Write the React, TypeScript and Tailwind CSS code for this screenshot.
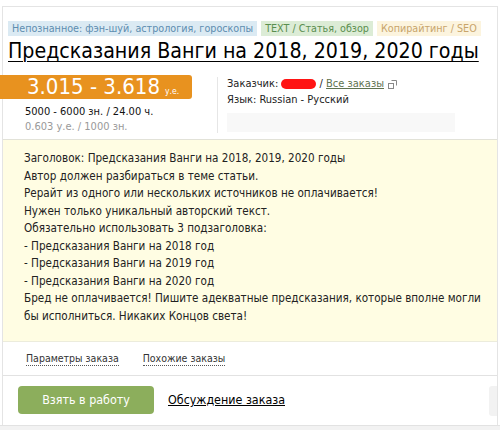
import React from "react";

export default function App() {
  const font = { fontFamily: '"DejaVu Sans Condensed", "DejaVu Sans", sans-serif' };
  return (
    <div className="w-[500px] h-[430px] bg-white overflow-hidden relative" style={font}>
      <div className="mt-[6px] ml-[2px] mr-[2px] border-l border-t border-r border-[#e4e4e4] h-[419px] flex flex-col">
        {/* tags */}
        <div className="flex gap-[4px] pl-[5px] pt-[14px] text-[10.7px] leading-[15px] whitespace-nowrap">
          <span className="bg-[#dbeaf3] text-[#5d8db0] px-[4px]">Непознанное: фэн-шуй, астрология, гороскопы</span>
          <span className="bg-[#dcecd6] text-[#5a8e4f] px-[4px]">TEXT / Статья, обзор</span>
          <span className="bg-[#fcf4de] text-[#c8a46a] px-[4px]">Копирайтинг / SEO</span>
        </div>
        {/* title */}
        <div className="pl-[5px] pt-[2px] whitespace-nowrap">
          <span className="text-[21.2px] leading-[26px] text-black underline underline-offset-[3px] decoration-1">
            Предсказания Ванги на 2018, 2019, 2020 годы
          </span>
        </div>
        {/* price row */}
        <div className="flex mt-[10px] h-[64px]">
          <div className="w-[217px] -ml-[3px] shrink-0">
            <div className="w-[192px] h-[24px] bg-[#e8921f] rounded-r-[3px] flex items-baseline pl-[27px] text-white whitespace-nowrap">
              <span className="text-[22px] leading-[24px]">3.015 - 3.618</span>
              <span className="text-[8.5px] ml-[5px]">у.е.</span>
            </div>
            <div className="pl-[25px] pt-[5px] text-[11px] leading-[15px] text-[#111] whitespace-nowrap">5000 - 6000 зн. / 24.00 ч.</div>
            <div className="pl-[25px] text-[11px] leading-[15px] text-[#999] whitespace-nowrap">0.603 у.е. / 1000 зн.</div>
          </div>
          <div className="w-px bg-[#e6e6e6] h-[56px] mt-[2px] shrink-0" />
          <div className="pl-[9px] pt-[1px] text-[11px] leading-[16px] text-[#222] whitespace-nowrap">
            <div className="flex items-center">
              <span>Заказчик:&nbsp;</span>
              <span className="inline-block w-[35px] h-[10px] rounded-full bg-[#ff1414]" />
              <span>&nbsp;/&nbsp;</span>
              <span className="text-[#5f7350] underline">Все заказы</span>
              <svg width="9" height="9" viewBox="0 0 9 9" className="ml-[4px]" fill="none" stroke="#888" strokeWidth="1">
                <rect x="0.5" y="3.5" width="5" height="5" />
                <path d="M3.5 0.5h5v5" />
              </svg>
            </div>
            <div>Язык: Russian - Русский</div>
            <div className="mt-[5px] w-[228px] h-[19px] bg-[#f8f8f8]" />
          </div>
        </div>
        {/* description */}
        <div className="border-t border-[#e2e2d8] bg-[#fffde3] pl-[21px] pt-[10px] h-[202px] text-[11.6px] leading-[17.5px] text-[#222] whitespace-nowrap">
          <div>Заголовок: Предсказания Ванги на 2018, 2019, 2020 годы</div>
          <div>Автор должен разбираться в теме статьи.</div>
          <div>Рерайт из одного или нескольких источников не оплачивается!</div>
          <div>Нужен только уникальный авторский текст.</div>
          <div>Обязательно использовать 3 подзаголовка:</div>
          <div>- Предсказания Ванги на 2018 год</div>
          <div>- Предсказания Ванги на 2019 год</div>
          <div>- Предсказания Ванги на 2020 год</div>
          <div>Бред не оплачивается! Пишите адекватные предсказания, которые вполне могли</div>
          <div>бы исполниться. Никаких Концов света!</div>
        </div>
        {/* links */}
        <div className="h-[35px] flex items-center gap-[24px] pl-[23px] text-[10.5px] text-[#333] border-t border-[#ececdc] border-b border-b-[#e2e2e2] whitespace-nowrap">
          <span className="border-b border-dotted border-[#555] leading-[13px]">Параметры заказа</span>
          <span className="border-b border-dotted border-[#555] leading-[13px]">Похожие заказы</span>
        </div>
        {/* actions */}
        <div className="flex pl-[15px] pt-[10px] h-[49px] items-start whitespace-nowrap">
          <div className="w-[136px] h-[28px] rounded-[4px] bg-[#8cae5c] text-white text-[12.4px] flex items-center justify-center">
            Взять в работу
          </div>
          <span className="ml-[14px] mt-[5px] text-[12.4px] text-black underline">Обсуждение заказа</span>
          <div className="ml-auto w-[8px] h-[30px] bg-[#f2f2f2] rounded-l-[3px]" />
        </div>
      </div>
      <div className="absolute left-0 right-0 bottom-0 h-[5px] bg-[#f2f2f2] border-t border-[#e2e2e2]" />
    </div>
  );
}
